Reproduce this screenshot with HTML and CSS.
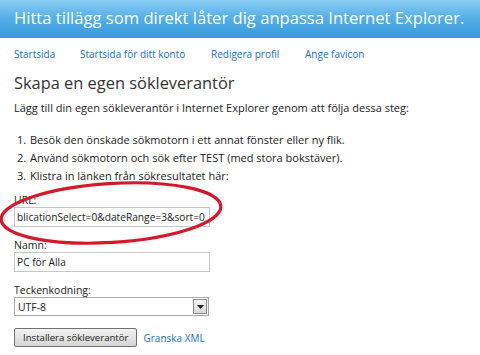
FILE: index.html
```html
<!DOCTYPE html>
<html lang="sv">
<head>
    <meta charset="UTF-8">
    <title>Skapa en egen sökleverantör</title>
    <link rel="stylesheet" href="styles.css">
</head>
<body>

<div class="banner">Hitta tillägg som direkt låter dig anpassa Internet Explorer.</div>

<div class="nav">
    <a href="#">Startsida</a>
    <a href="#">Startsida för ditt konto</a>
    <a href="#">Redigera profil</a>
    <a href="#">Ange favicon</a>
</div>

<div class="content">
    <h1>Skapa en egen sökleverantör</h1>
    <p class="intro">Lägg till din egen sökleverantör i Internet Explorer genom att följa dessa steg:</p>

    <ol class="steps">
        <li>Besök den önskade sökmotorn i ett annat fönster eller ny flik.</li>
        <li>Använd sökmotorn och sök efter TEST (med stora bokstäver).</li>
        <li>Klistra in länken från sökresultatet här:</li>
    </ol>

    <div class="field url-field">
        <label>URL:</label>
        <div class="box">blicationSelect=0&amp;dateRange=3&amp;sort=0</div>
        <!-- hand drawn marker round the url box -->
        <svg class="marker" width="250" height="80" viewBox="0 0 250 80">
            <ellipse cx="111" cy="40" rx="110" ry="29.5" transform="rotate(-3.5 111 40)"
                     fill="none" stroke="#d3192b" stroke-width="3.2"/>
        </svg>
    </div>

    <div class="field">
        <label>Namn:</label>
        <div class="box">PC för Alla</div>
    </div>

    <div class="field">
        <label>Teckenkodning:</label>
        <div class="select">
            <span>UTF-8</span>
            <span class="arrow">
                <svg width="7" height="4" viewBox="0 0 7 4"><path d="M0 0h7L3.5 4z" fill="#222"/></svg>
            </span>
        </div>
    </div>

    <div class="actions">
        <button class="install">Installera sökleverantör</button>
        <a href="#">Granska XML</a>
    </div>
</div>

</body>
</html>
```

FILE: styles.css
```css
body {
    margin: 0;
    font-family: 'Open Sans', 'DejaVu Sans', sans-serif;
    font-size: 11px;
    color: #222;
    background-color: #fff;
}

a {
    color: #1e6fb5;
    text-decoration: none;
}

.banner {
    height: 38px;
    line-height: 36px;
    padding-left: 14px;
    font-size: 16.6px;
    color: #fff;
    white-space: nowrap;
    background: linear-gradient(#8ccdf3, #56b0e8 45%, #3799dc);
}

.nav {
    display: flex;
    padding: 7px 0 0 14px;
    height: 18px;
    line-height: 18px;
    font-size: 10px;
}

.nav a:nth-child(1) {
    width: 66px;
}

.nav a:nth-child(2) {
    width: 131px;
}

.nav a:nth-child(3) {
    width: 94px;
}

.content {
    padding: 0 14px;
}

h1 {
    margin: 8px 0 0;
    font-size: 16.4px;
    font-weight: normal;
    color: #333;
    line-height: 24px;
}

.intro {
    margin: 5px 0 0;
    line-height: 16px;
}

.steps {
    margin: 15px 0 0;
    padding-left: 15px;
    line-height: 18px;
}

.steps li {
    padding-left: 1px;
}

.field {
    margin-top: 11px;
}

.field label {
    display: block;
    line-height: 14px;
    font-size: 10.5px;
}

.url-field {
    position: relative;
    margin-top: 8px;
}

.marker {
    position: absolute;
    left: -14px;
    top: -20px;
}

.box {
    width: 192px;
    height: 18px;
    line-height: 18px;
    padding-left: 2px;
    border: 1px solid #c8c8c8;
    font-size: 10.2px;
    white-space: nowrap;
    overflow: hidden;
}

.select {
    display: flex;
    justify-content: space-between;
    align-items: center;
    width: 190px;
    height: 17px;
    padding-left: 3px;
    border: 1px solid #a9a9a9;
    font-size: 10.4px;
}

.arrow {
    display: flex;
    align-items: center;
    justify-content: center;
    width: 12px;
    height: 13px;
    margin-right: 1px;
    border: 1px solid #8a8a8a;
    background: linear-gradient(#f4f4f4, #d8d8d8);
}

.actions {
    display: flex;
    align-items: center;
    margin-top: 12px;
}

.install {
    height: 19px;
    padding: 0 8px;
    margin-right: 6px;
    font-family: inherit;
    font-size: 9.6px;
    color: #222;
    border: 1px solid #707070;
    border-radius: 2px;
    background: linear-gradient(#f2f2f2, #e4e4e4 50%, #d4d4d4);
}

.actions a {
    font-size: 10px;
}
```
